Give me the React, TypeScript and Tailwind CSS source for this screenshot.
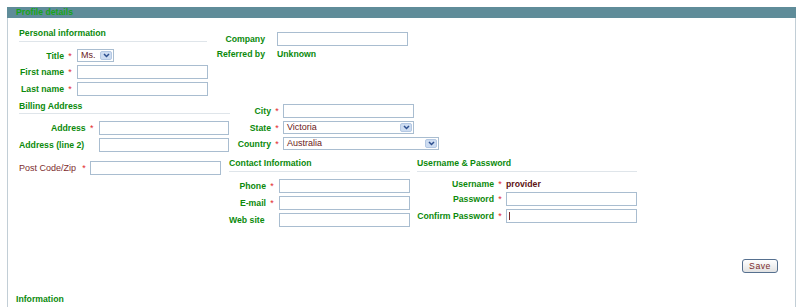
import React from "react";

const LABEL = "text-[8.7px] font-bold text-[#0b8a0b] leading-[12px] whitespace-nowrap";
const HEADING =
  "text-[8.7px] font-bold text-[#0b8a0b] leading-[12px] border-b border-[#dfe5ea] whitespace-nowrap";

function Star({ className = "w-[12px]" }: { className?: string }) {
  return (
    <span className={`${className} text-center text-[9px] leading-[12px] text-[#e2282a]`}>*</span>
  );
}

function Field({ className, caret }: { className: string; caret?: boolean }) {
  return (
    <div className={`relative h-[14px] border border-[#a9bdd0] bg-white ${className}`}>
      {caret && <div className="absolute left-[2px] top-[2px] h-[8px] w-px bg-[#7a2a2a]" />}
    </div>
  );
}

function Sel({ value, className }: { value: string; className: string }) {
  return (
    <div
      className={`flex h-[13px] items-center border border-[#a9bdd0] bg-white pl-[3px] pr-[1px] ${className}`}
    >
      <span className="flex-1 text-[9px] leading-none text-[#6a2020]">{value}</span>
      <span className="flex h-[9px] w-[12px] items-center justify-center rounded-[2px] border border-[#b4c8e3] bg-[#cddcf1]">
        <svg width="7" height="5" viewBox="0 0 7 5">
          <path d="M1 1 L3.5 3.5 L6 1" stroke="#2d4f8f" strokeWidth="1.5" fill="none" />
        </svg>
      </span>
    </div>
  );
}

export default function App() {
  return (
    <div className="h-[307px] w-[800px] overflow-hidden bg-white pt-[7px] font-['Liberation_Sans',Arial,sans-serif]">
      <div className="ml-[7px] h-[300px] w-[789px] border-x border-[#c2ced6]">
        {/* Title bar */}
        <div className="-mx-px h-[11px] bg-[#5f8c99] pl-[9px] text-[8.7px] font-bold leading-[11px] text-[#17a317]">
          Profile details
        </div>

        <div className="pl-[11px]">
          {/* Personal information / company */}
          <div className="flex h-[78px]">
            <div className="w-[197px] pt-[9px]">
              <div className={`${HEADING} w-[188px] pb-[2px]`}>Personal information</div>
              <div className="mt-[7px] flex h-[13px] items-center">
                <span className={`${LABEL} w-[45px] text-right`}>Title</span>
                <Star />
                <Sel value="Ms." className="ml-[1px] w-[37px]" />
              </div>
              <div className="mt-[3px] flex h-[14px] items-center">
                <span className={`${LABEL} w-[45px] text-right`}>First name</span>
                <Star />
                <Field className="ml-[1px] w-[131px]" />
              </div>
              <div className="mt-[3px] flex h-[14px] items-center">
                <span className={`${LABEL} w-[45px] text-right`}>Last name</span>
                <Star />
                <Field className="ml-[1px] w-[131px]" />
              </div>
            </div>
            <div className="pt-[14px]">
              <div className="flex h-[14px] items-center">
                <span className={`${LABEL} w-[49px] text-right`}>Company</span>
                <Field className="ml-[12px] w-[131px]" />
              </div>
              <div className="mt-[2px] flex h-[12px] items-center">
                <span className={`${LABEL} w-[49px] text-right`}>Referred by</span>
                <span className={`${LABEL} ml-[12px]`}>Unknown</span>
              </div>
            </div>
          </div>

          {/* Billing address / city */}
          <div className="flex h-[56px]">
            <div className="w-[210px] pt-[4px]">
              <div className={`${HEADING} w-[211px] pb-[1px]`}>Billing Address</div>
              <div className="mt-[7px] flex h-[14px] items-center">
                <span className={`${LABEL} w-[67px] text-right`}>Address</span>
                <Star />
                <Field className="ml-[1px] w-[131px]" />
              </div>
              <div className="mt-[3px] flex h-[14px] items-center">
                <span className={`${LABEL} w-[67px]`}>Address (line 2)</span>
                <span className="w-[12px]" />
                <Field className="ml-[1px] w-[131px]" />
              </div>
            </div>
            <div className="pt-[8px]">
              <div className="flex h-[14px] items-center">
                <span className={`${LABEL} w-[42px] text-right`}>City</span>
                <Star />
                <Field className="w-[131px]" />
              </div>
              <div className="mt-[3px] flex h-[13px] items-center">
                <span className={`${LABEL} w-[42px] text-right`}>State</span>
                <Star />
                <Sel value="Victoria" className="w-[131px]" />
              </div>
              <div className="mt-[3px] flex h-[13px] items-center">
                <span className={`${LABEL} w-[42px] text-right`}>Country</span>
                <Star />
                <Sel value="Australia" className="w-[156px]" />
              </div>
            </div>
          </div>

          {/* Post code / contact / username */}
          <div className="flex h-[75px]">
            <div className="w-[210px] pt-[9px]">
              <div className="flex h-[14px] items-center">
                <span className="w-[60px] whitespace-nowrap text-[9px] leading-[12px] text-[#7d2d2d]">
                  Post Code/Zip
                </span>
                <Star className="w-[10px]" />
                <Field className="ml-[1px] w-[131px]" />
              </div>
            </div>
            <div className="w-[188px] pt-[5px]">
              <div className={`${HEADING} w-[181px] pb-[2px]`}>Contact Information</div>
              <div className="mt-[7px] flex h-[14px] items-center">
                <span className={`${LABEL} w-[37px] text-right`}>Phone</span>
                <Star />
                <Field className="ml-[1px] w-[131px]" />
              </div>
              <div className="mt-[3px] flex h-[14px] items-center">
                <span className={`${LABEL} w-[37px] text-right`}>E-mail</span>
                <Star />
                <Field className="ml-[1px] w-[131px]" />
              </div>
              <div className="mt-[3px] flex h-[14px] items-center">
                <span className={`${LABEL} w-[37px]`}>Web site</span>
                <span className="w-[12px]" />
                <Field className="ml-[1px] w-[131px]" />
              </div>
            </div>
            <div className="pt-[5px]">
              <div className={`${HEADING} w-[220px] pb-[2px]`}>Username &amp; Password</div>
              <div className="mt-[6px] flex h-[12px] items-center">
                <span className={`${LABEL} w-[77px] text-right`}>Username</span>
                <Star className="w-[12px]" />
                <span className="text-[8.7px] font-bold leading-[12px] text-[#5c1212]">provider</span>
              </div>
              <div className="mt-[2px] flex h-[14px] items-center">
                <span className={`${LABEL} w-[77px] text-right`}>Password</span>
                <Star className="w-[12px]" />
                <Field className="w-[131px]" />
              </div>
              <div className="mt-[3px] flex h-[14px] items-center">
                <span className={`${LABEL} w-[77px] text-right`}>Confirm Password</span>
                <Star className="w-[12px]" />
                <Field className="w-[131px]" caret />
              </div>
            </div>
          </div>

          {/* Save */}
          <div className="flex justify-end pr-[17px] pt-[32px]">
            <button className="h-[14px] w-[36px] rounded-[3px] border border-[#56708f] bg-gradient-to-b from-white to-[#e2e2e2] text-[8.7px] leading-[12px] tracking-[0.5px] text-[#7a2a2a]">
              Save
            </button>
          </div>
        </div>

        <div className={`${LABEL} mt-[20px] pl-[8px]`}>Information</div>
      </div>
    </div>
  );
}
